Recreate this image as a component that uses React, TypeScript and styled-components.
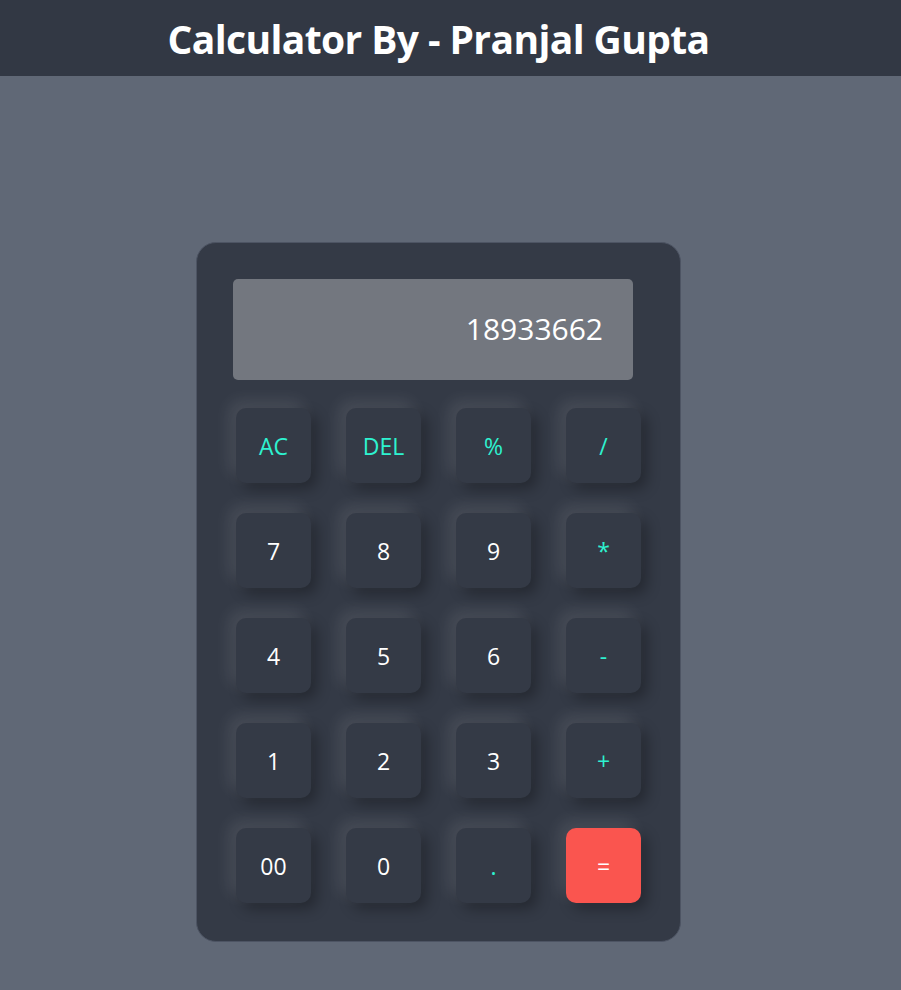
import React from "react"
import styled, { createGlobalStyle } from "styled-components"

const GlobalStyle = createGlobalStyle`
    html, body {
        margin: 0;
        padding: 0;
        background: #606876;
        font-family: "Open Sans", "Noto Sans", sans-serif;
    }
`;

const Page = styled.div`
    min-height: 990px;
`;

const Header = styled.header`
    background: #323844;
    height: 76px;
    display: flex;
    align-items: center;
    justify-content: center;
    padding-right: 24px;
`;

const Title = styled.h1`
    margin: 0;
    color: #fff;
    font-size: 39px;
    font-weight: 700;
    letter-spacing: -0.6px;
`;

const Main = styled.main`
    display: flex;
    justify-content: center;
    padding: 166px 24px 0 0;
`;

const Calculator = styled.div`
    width: 485px;
    height: 700px;
    box-sizing: border-box;
    background: #343a46;
    border: 1px solid #4d5463;
    border-radius: 20px;
    padding: 36px 0 0 36px;
`;

const Display = styled.div`
    width: 400px;
    height: 101px;
    box-sizing: border-box;
    background: #73777f;
    border-radius: 5px;
    color: #fff;
    font-size: 30px;
    display: flex;
    align-items: center;
    justify-content: flex-end;
    padding: 0 30px 2px 0;
`;

const Keys = styled.div`
    display: grid;
    grid-template-columns: repeat(4, 75px);
    grid-auto-rows: 75px;
    column-gap: 35px;
    row-gap: 30px;
    margin: 28px 0 0 3px;
`;

const Key = styled.button<{ $accent?: boolean; $equals?: boolean }>`
    border: none;
    border-radius: 10px;
    font-family: inherit;
    font-size: 23px;
    font-weight: 400;
    padding: 0;
    cursor: pointer;
    color: ${(p) => (p.$equals ? "#fff" : p.$accent ? "#2ef2d0" : "#fff")};
    background: ${(p) => (p.$equals ? "#fa554f" : "#343a46")};
    box-shadow: -7px -7px 16px rgba(255, 255, 255, 0.1),
        6px 6px 14px rgba(0, 0, 0, 0.3);
`;

const keys: { label: string; accent?: boolean; equals?: boolean }[] = [
    { label: "AC", accent: true },
    { label: "DEL", accent: true },
    { label: "%", accent: true },
    { label: "/", accent: true },
    { label: "7" },
    { label: "8" },
    { label: "9" },
    { label: "*", accent: true },
    { label: "4" },
    { label: "5" },
    { label: "6" },
    { label: "-", accent: true },
    { label: "1" },
    { label: "2" },
    { label: "3" },
    { label: "+", accent: true },
    { label: "00" },
    { label: "0" },
    { label: ".", accent: true },
    { label: "=", equals: true },
];

const App = () => {
    return (
        <Page>
            <GlobalStyle />
            <Header>
                <Title>Calculator By - Pranjal Gupta</Title>
            </Header>
            <Main>
                <Calculator>
                    <Display>18933662</Display>
                    <Keys>
                        {keys.map((k) => (
                            <Key key={k.label} $accent={k.accent} $equals={k.equals}>
                                {k.label}
                            </Key>
                        ))}
                    </Keys>
                </Calculator>
            </Main>
        </Page>
    )
}

export default App;
